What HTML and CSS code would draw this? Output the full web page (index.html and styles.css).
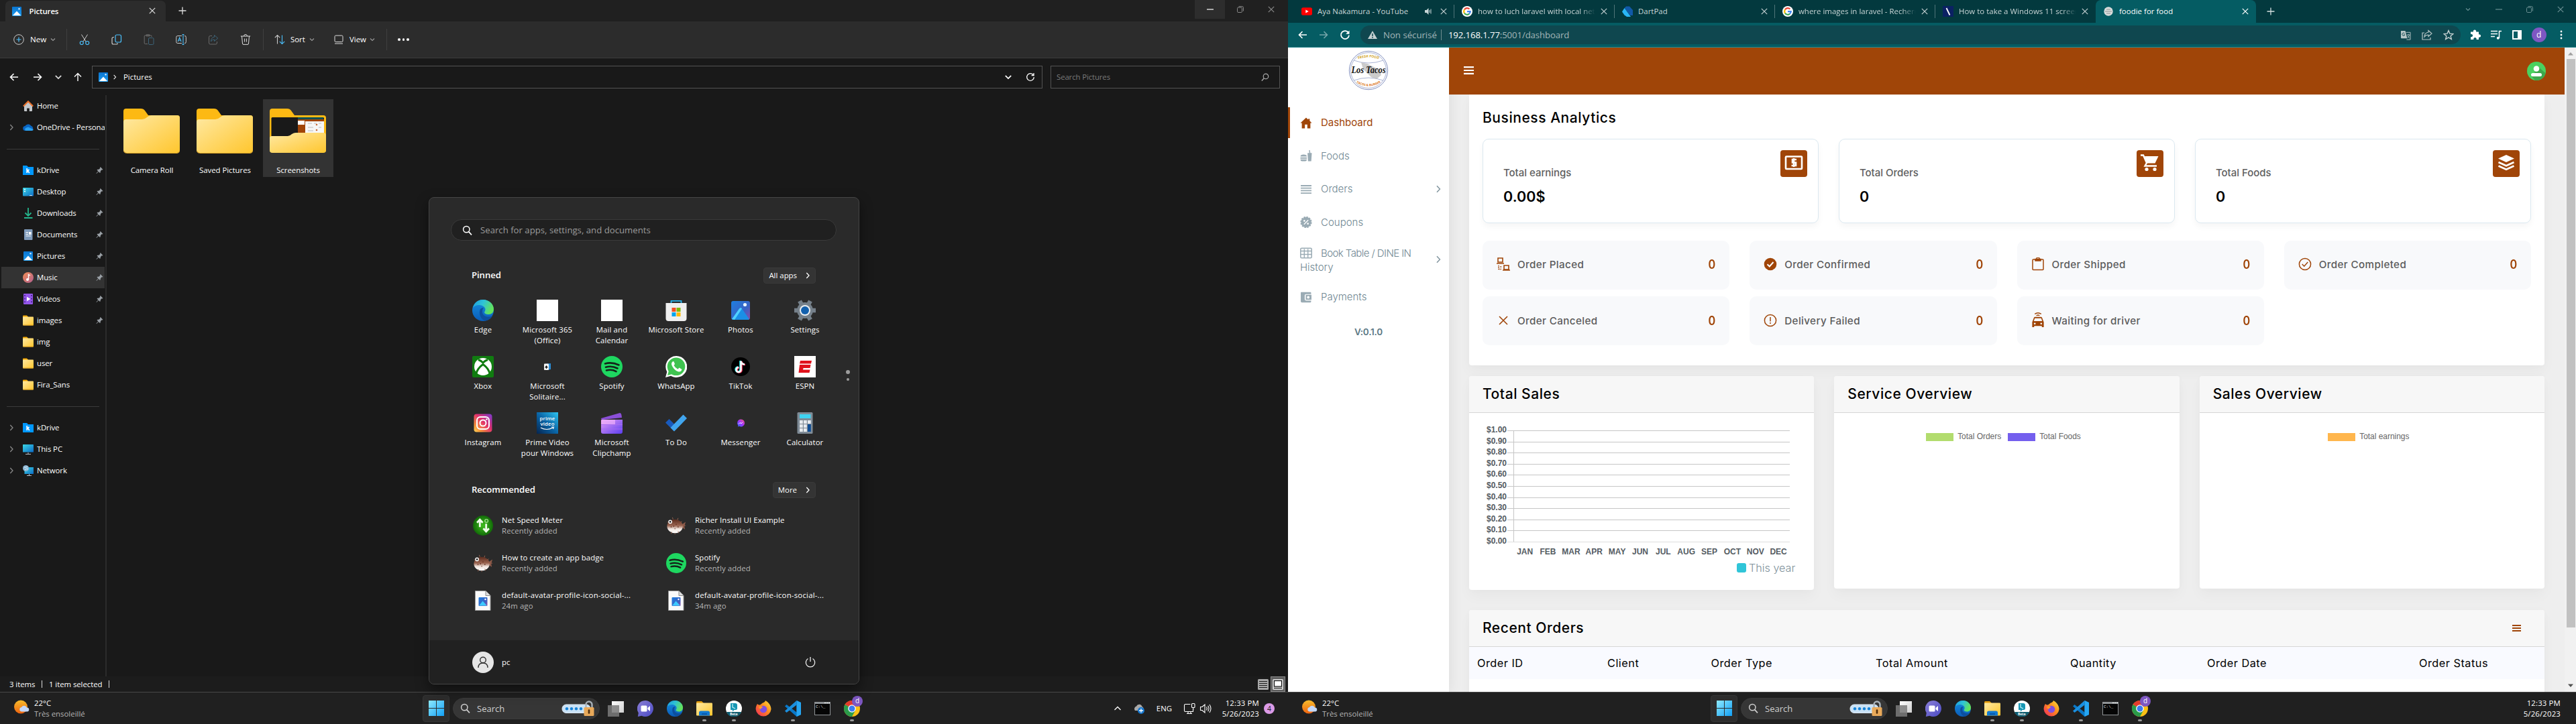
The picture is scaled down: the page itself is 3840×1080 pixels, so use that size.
FILE: index.html
```html
<!DOCTYPE html>
<html lang="en">
<head>
<meta charset="utf-8">
<title>Desktop</title>
<link rel="stylesheet" href="styles.css">
</head>
<body>
<svg class="defs" aria-hidden="true">
  <defs>
    <linearGradient id="gPic" x1="0" y1="0" x2="0" y2="1"><stop offset="0" stop-color="#0a74cf"/><stop offset="1" stop-color="#1f9df0"/></linearGradient>
    <linearGradient id="gFold" x1="0" y1="0" x2="1" y2="1"><stop offset="0" stop-color="#ffe9a3"/><stop offset="1" stop-color="#ffc62e"/></linearGradient>
    <linearGradient id="gScreen" x1="0" y1="0" x2="1" y2="1"><stop offset="0" stop-color="#3bd8e6"/><stop offset="1" stop-color="#0c69c4"/></linearGradient>
    <linearGradient id="gWin" x1="0" y1="0" x2="1" y2="1"><stop offset="0" stop-color="#8eeaff"/><stop offset="1" stop-color="#12a0f5"/></linearGradient>
    <linearGradient id="gMusic" x1="0" y1="0" x2="1" y2="1"><stop offset="0" stop-color="#f38e54"/><stop offset="1" stop-color="#b15f8f"/></linearGradient>
    <linearGradient id="gSun" x1="0" y1="0" x2="0" y2="1"><stop offset="0" stop-color="#f7bc2c"/><stop offset="1" stop-color="#ee6410"/></linearGradient>
    <linearGradient id="gInsta" x1="1" y1="0" x2="0" y2="1"><stop offset="0" stop-color="#7a3bd2"/><stop offset=".45" stop-color="#e1306c"/><stop offset=".8" stop-color="#f99a3b"/><stop offset="1" stop-color="#ffd65a"/></linearGradient>
    <linearGradient id="gPrime" x1="1" y1="0" x2="0" y2="1"><stop offset="0" stop-color="#2ec4ef"/><stop offset=".5" stop-color="#0a66a8"/><stop offset="1" stop-color="#06244e"/></linearGradient>
    <linearGradient id="gClip" x1="0" y1="0" x2="1" y2="1"><stop offset="0" stop-color="#e59cf5"/><stop offset="1" stop-color="#5b3df0"/></linearGradient>
    <linearGradient id="gPhotos" x1="0" y1="0" x2="1" y2="1"><stop offset="0" stop-color="#1d7fe0"/><stop offset=".6" stop-color="#3a62c4"/><stop offset="1" stop-color="#8c4ea8"/></linearGradient>
    <linearGradient id="gEdgeTop" x1="0" y1="0" x2="1" y2=".4"><stop offset="0" stop-color="#1c9be0"/><stop offset=".5" stop-color="#2fc3d6"/><stop offset="1" stop-color="#62e35c"/></linearGradient>
    <linearGradient id="gEdge" x1="0" y1="0" x2="0" y2="1"><stop offset="0" stop-color="#1790e0"/><stop offset="1" stop-color="#0a5cb8"/></linearGradient>
    <linearGradient id="gChat" x1="0" y1="0" x2="1" y2="1"><stop offset="0" stop-color="#8b7fd6"/><stop offset="1" stop-color="#4b4bc4"/></linearGradient>
    <linearGradient id="gFox" x1="1" y1="0" x2="0" y2="1"><stop offset="0" stop-color="#ffe63d"/><stop offset=".45" stop-color="#ff8a1e"/><stop offset="1" stop-color="#f0245f"/></linearGradient>
    <linearGradient id="gMsg" x1="0" y1="1" x2="1" y2="0"><stop offset="0" stop-color="#2a6bff"/><stop offset=".5" stop-color="#a033ff"/><stop offset="1" stop-color="#ff5f70"/></linearGradient>
    <linearGradient id="gTask" x1="0" y1="0" x2="1" y2="1"><stop offset="0" stop-color="#ffffff"/><stop offset="1" stop-color="#cfcfcf"/></linearGradient>
    <linearGradient id="gPuff" x1="0" y1="0" x2="0" y2="1"><stop offset="0" stop-color="#5a2a1c"/><stop offset=".45" stop-color="#9a6450"/><stop offset=".7" stop-color="#f1e6e0"/><stop offset="1" stop-color="#ffffff"/></linearGradient>
    <radialGradient id="gNet"><stop offset="0" stop-color="#3fbf1e"/><stop offset="1" stop-color="#126b08"/></radialGradient>
  </defs>

  <symbol id="pic" viewBox="0 0 14 14"><rect width="14" height="14" rx="1" fill="url(#gPic)"/><path d="M1 13 7 6.5 13 13z" fill="#fff"/><circle cx="10.5" cy="3.3" r="1.2" fill="#cfeaff"/></symbol>
  <symbol id="chevd" viewBox="0 0 10 10"><path d="M2 3.5 5 6.5 8 3.5" fill="none" stroke="currentColor" stroke-width="1.2"/></symbol>
  <symbol id="chevr" viewBox="0 0 10 10"><path d="M3.3 1 7 5 3.3 9" fill="none" stroke="currentColor" stroke-width="1.3"/></symbol>
  <symbol id="x" viewBox="0 0 10 10"><path d="M.8.8 9.2 9.2M9.2.8.8 9.2" fill="none" stroke="currentColor" stroke-width="1.2"/></symbol>
  <symbol id="plus" viewBox="0 0 12 12"><path d="M6 .5v11M.5 6h11" fill="none" stroke="currentColor" stroke-width="1.3"/></symbol>
  <symbol id="restore" viewBox="0 0 10 10"><rect x=".5" y="2.2" width="7" height="7.3" rx="1.3" fill="none" stroke="currentColor"/><path d="M2.5.6h5A2 2 0 0 1 9.5 2.6v5" fill="none" stroke="currentColor"/></symbol>
  <symbol id="dash" viewBox="0 0 10 10"><path d="M0 5h10" stroke="currentColor" stroke-width="1.2"/></symbol>
  <symbol id="left" viewBox="0 0 14 14"><path d="M13 7H1.5M6.5 2l-5 5 5 5" fill="none" stroke="currentColor" stroke-width="1.6"/></symbol>
  <symbol id="right" viewBox="0 0 14 14"><path d="M1 7h11.5M7.5 2l5 5-5 5" fill="none" stroke="currentColor" stroke-width="1.6"/></symbol>
  <symbol id="up" viewBox="0 0 14 14"><path d="M7 13V1.5M2 6.5l5-5 5 5" fill="none" stroke="currentColor" stroke-width="1.4"/></symbol>
  <symbol id="reload" viewBox="0 0 16 16"><path d="M13.3 5.2A6 6 0 1 0 14 8.6" fill="none" stroke="currentColor" stroke-width="1.8"/><path d="M14.5 1.5v5.3H9.2z" fill="currentColor"/></symbol>
  <symbol id="refresh" viewBox="0 0 14 14"><path d="M11.5 4.2A5.3 5.3 0 1 0 12.3 7M12 1v3.5H8.6" fill="none" stroke="currentColor" stroke-width="1.3"/></symbol>
  <symbol id="mag" viewBox="0 0 16 16"><circle cx="6.7" cy="6.5" r="5" fill="none" stroke="currentColor" stroke-width="1.6"/><path d="m10.3 10.3 4.6 5" stroke="currentColor" stroke-width="1.8"/></symbol>
  <symbol id="pin" viewBox="0 0 12 12"><path d="M7.3.6 11.5 4.8 10.3 5.5 9.3 5.3 7.4 7.6 7.3 9.6 6.5 10.4 4.3 8.2 1 11.4.5 11 3.7 7.6 1.7 5.5 2.5 4.7 4.5 4.6 6.8 2.7 6.6 1.6z" fill="#9aa0a6"/></symbol>
  <symbol id="fold" viewBox="0 0 16 16"><path d="M0 1.5Q0 .6 1 .6h5L8 2.6V6H0z" fill="#f5a800"/><rect y="2.4" width="16" height="13" rx="1" fill="url(#gFold)"/><path d="M0 14.4h16q0 1-1 1H1q-1 0-1-1z" fill="#e0a11c"/></symbol>
  <symbol id="bigfold" viewBox="0 0 84 67"><path d="M0 4Q0 0 4 0h22q4 0 6 3l5 7H80q4 0 4 4v12H0z" fill="#fdb913"/><path d="M0 20q0-4 4-4H28q4 0 7-3 3-3 7-3H80q4 0 4 4V62q0 4-4 4H4q-4 0-4-4z" fill="url(#gFold)"/><path d="M.5 63q1 3.500 4 3.500H80q3 0 3.500-3.500" fill="none" stroke="#dba226"/></symbol>
  <symbol id="kdrive" viewBox="0 0 16 16"><path d="M0 1h6l2 2h8v12H0z" fill="#0098ff"/><path d="M6.200 5v7M6.200 9.500 9.500 7M7.300 8.700 9.800 12" stroke="#fff" stroke-width="1.700" fill="none"/></symbol>
  <symbol id="edge" viewBox="0 0 32 32"><circle cx="16" cy="16" r="16" fill="url(#gEdge)"/><path d="M1 12C3 4 9 0 16 0c9 0 16 6.500 16 14 0 5-3 8-8 8-4 0-6-1.500-6-3 0-1 1.500-2 1.500-4.500C19.500 11 15 8 10.500 8 6 8 2.500 10 1 12z" fill="url(#gEdgeTop)"/><path d="M12 14c-3 6 0 16 8 17.500 5-1 8.500-4 10-7.500-6 3.500-15 1-15-6 0-3 1-5 2-6-2 0-4 1-5 2z" fill="#0d4f9e"/></symbol>
  <symbol id="spotify" viewBox="0 0 32 32"><circle cx="16" cy="16" r="16" fill="#1ed760"/><path d="M6 11.500q10-3 20.500 2M7 16.700q9-2.600 17.500 1.800M8 21.500q8-2 14.500 1.600" fill="none" stroke="#14241a" stroke-width="2.600" stroke-linecap="round"/></symbol>
  <symbol id="puffer" viewBox="0 0 32 32"><path d="M24 15l7-5-1.500 5.500L32 16l-3 1 1 5-6-4z" fill="#8d5a49"/><ellipse cx="14" cy="17" rx="12.500" ry="11" fill="url(#gPuff)"/><path d="M2 10 4 12M10 3l1 3M19 4l-1 3M25 9l-2 2M8 29l1-3M20 28l-1-3M14 30v-2" stroke="#9a6450"/><circle cx="6.500" cy="10" r="3" fill="#fff"/><circle cx="6.500" cy="10" r="1.500" fill="#222"/><g fill="#6f3a2a"><circle cx="12" cy="17" r="1"/><circle cx="16" cy="14" r="1"/><circle cx="19" cy="18" r="1"/><circle cx="8" cy="18" r="1"/><circle cx="14" cy="21" r=".8"/></g></symbol>
  <symbol id="docpic" viewBox="0 0 24 30"><path d="M.5.500H16l7 7V29.500H.5z" fill="#fafafa" stroke="#9b9b9b"/><path d="M16 .5v7h7" fill="#ddd" stroke="#8a8a8a"/><rect x="5.500" y="10" width="13" height="13" rx="1" fill="url(#gPhotos)"/><path d="M6 22.500 11.500 15.500 18 22.500z" fill="#3ccaff"/><circle cx="15.500" cy="13" r="1.200" fill="#fff"/></symbol>
  <symbol id="winlogo" viewBox="0 0 23 23"><path d="M0 0h11v11H0zM12 0h11v11H12zM0 12h11v11H0zM12 12h11v11H12z" fill="url(#gWin)"/></symbol>
  <symbol id="weather" viewBox="0 0 24 22"><circle cx="11" cy="10.500" r="10" fill="url(#gSun)"/><path d="M12 17.500a3.300 3.300 0 0 1 0-6.500 4.500 4.500 0 0 1 8 .5 3 3 0 0 1 .5 6z" fill="#c3d8fb"/></symbol>
  <symbol id="lock" viewBox="0 0 50 24"><rect x="1" y="6" width="42" height="12.500" rx="6" fill="#c9e2f7" stroke="#dfe9f2"/><g fill="#1683d8"><circle cx="8" cy="12.300" r="2.200"/><circle cx="15" cy="12.300" r="2.200"/><circle cx="22" cy="12.300" r="2.200"/><circle cx="29" cy="12.300" r="2.200"/></g><path d="M36.500 11V6a4.500 4.500 0 0 1 9 0v5" fill="none" stroke="#a9b3bb" stroke-width="2.400"/><rect x="33.500" y="10" width="15" height="13" rx="1.500" fill="#e8a95a"/><path d="M41 14.500v4" stroke="#4d2c0c" stroke-width="2.600" stroke-linecap="round"/></symbol>
  <symbol id="taskview" viewBox="0 0 24 24"><rect x="6" y="1" width="18" height="17" fill="url(#gTask)"/><rect x="0" y="7" width="17" height="17" fill="#7b7b7b" opacity=".85"/></symbol>
  <symbol id="chat" viewBox="0 0 24 24"><path d="M12 0a12 12 0 1 1-5.500 22.700L.8 24l1-5.500A12 12 0 0 1 12 0z" fill="url(#gChat)"/><rect x="5.500" y="7.500" width="9" height="9" rx="1.500" fill="#fff"/><path d="m15.500 11 3.500-3v8l-3.500-3z" fill="#fff"/></symbol>
  <symbol id="explorer" viewBox="0 0 24 24"><path d="M0 2.500Q0 1 1.500 1H8l2.500 2.500V9H0z" fill="#e39a08"/><rect y="3.500" width="24" height="19" rx="1.200" fill="url(#gFold)"/><path d="M4 22.500V18a2.500 2.500 0 0 1 2.500-2.500h11A2.500 2.500 0 0 1 20 18v4.500z" fill="#127ad1"/><path d="M8 20h8" stroke="#0b4f9a" stroke-width="1.500"/></symbol>
  <symbol id="bing" viewBox="0 0 24 24"><circle cx="12" cy="12" r="12" fill="#fff"/><path d="M.9 17h22.200A12 12 0 0 1 .9 17z" fill="#0f5c6e"/><path d="M7 4h7q3 0 3 3v5q0 2-2.500 2h-2L10 16.500V14H7z" fill="#1796b4"/><path d="M10 5v5l4 2" stroke="#bff0f5" stroke-width="1.300" fill="none"/></symbol>
  <symbol id="firefox" viewBox="0 0 24 24"><path d="M3 5c1 1 2 1.500 4 1.500C9 5 10 4 11 3.500 13 3 14.500 2 15 0c4 2 8.500 7 8.500 13A11.500 11.500 0 0 1 .6 13C.5 10 1.500 7 3 5z" fill="url(#gFox)"/><circle cx="12" cy="13" r="5.300" fill="#7e4fe0"/><path d="M5.500 9c2-1 4-.5 6 1-2 .5-3 1.500-3.500 3-2-1-3-2-2.500-4z" fill="#ff9b24"/></symbol>
  <symbol id="vscode" viewBox="0 0 24 24"><path d="M17.500 0 24 3v18l-6.500 3L0 8.500 2.500 6 17.500 17.500z" fill="#0a78c8"/><path d="M17.500 0 24 3v18l-6.500 3z" fill="#26a6f2"/><path d="M17.500 6.500 2.500 18 0 15.500 17.500 0z" fill="#1a8fdf"/></symbol>
  <symbol id="cmd" viewBox="0 0 24 20"><rect width="24" height="20" fill="#8f9396"/><rect x="1" y="3" width="22" height="16" fill="#050505"/><path d="M15 1.500h2M18 1.500h2M21 1.500h2" stroke="#fff"/></symbol>
  <symbol id="chrome" viewBox="0 0 24 24"><circle cx="12" cy="12" r="12" fill="#fbc116"/><path d="M12 12 1.600 6A12 12 0 0 1 22.400 6z" fill="#e33b2e"/><path d="M12 12 1.600 6A12 12 0 0 0 12 24l5-9z" fill="#2a9b4a"/><circle cx="12" cy="12" r="5.800" fill="#fff"/><circle cx="12" cy="12" r="4.500" fill="#3a7cf0"/></symbol>
  <symbol id="google" viewBox="0 0 16 16"><circle cx="8" cy="8" r="8" fill="#fff"/><g fill="none" stroke-width="2.200"><path d="M4 5.300A4.700 4.700 0 0 1 11.400 4.600" stroke="#ea4335"/><path d="M4 10.600a4.700 4.700 0 0 1 0-5.300" stroke="#fbbc05"/><path d="M11.200 11.500A4.700 4.700 0 0 1 4 10.600" stroke="#34a853"/><path d="M8 8.200h4.700a4.700 4.700 0 0 1-1.500 3.300" stroke="#4285f4"/></g></symbol>
</svg>

<div class="desk">

<!-- Left display: file explorer -->
<section class="screen left-screen">
  <div class="titlebar">
    <div class="tab-ex"><svg class="i14"><use href="#pic"/></svg><b>Pictures</b><svg class="i10"><use href="#x"/></svg></div>
    <svg class="i12 newtab"><use href="#plus"/></svg>
    <div class="winbtns"><span class="hot"><svg class="i10"><use href="#dash"/></svg></span><span><svg class="i10"><use href="#restore"/></svg></span><span><svg class="i10"><use href="#x"/></svg></span></div>
  </div>
  <div class="cmdbar">
    <div class="cmd c-new"><svg class="i16" viewBox="0 0 16 16"><circle cx="8" cy="8" r="7.300" fill="none" stroke="#ccc"/><path d="M8 4.500v7M4.500 8h7" stroke="#4cc2ff" stroke-width="1.200"/></svg><span>New</span><svg class="i10"><use href="#chevd"/></svg></div>
    <div class="cmd-icons">
      <svg class="i16" viewBox="0 0 16 16" fill="none"><path d="M3.500.5 10 11M12.500.500 6 11" stroke="#ccc"/><circle cx="3.800" cy="13" r="2.500" stroke="#4cc2ff" stroke-width="1.200"/><circle cx="12.200" cy="13" r="2.500" stroke="#4cc2ff" stroke-width="1.200"/></svg>
      <svg class="i16" viewBox="0 0 16 16" fill="none"><path d="M4 4.500H3a2 2 0 0 0-2 2V13a2 2 0 0 0 2 2h4.500a2 2 0 0 0 2-1.500" stroke="#ccc" stroke-width="1.200"/><rect x="6" y="1" width="8.500" height="11" rx="2" stroke="#4cc2ff" stroke-width="1.200"/></svg>
      <svg class="i16 dim" viewBox="0 0 16 16" fill="none"><path d="M6 14.500H2.500A1.300 1.300 0 0 1 1.200 13V3A1.300 1.300 0 0 1 2.500 1.800h8A1.300 1.300 0 0 1 12 3v1M4 .8h5v2H4z" stroke="#aaa"/><rect x="7.500" y="5.500" width="7.500" height="10" rx="1.500" stroke="#4c9bc4"/></svg>
      <svg class="i16" viewBox="0 0 16 16" fill="none"><path d="M9 2.500H2.800A2 2 0 0 0 .8 4.500v7a2 2 0 0 0 2 2H9M13 2.500a2 2 0 0 1 2.300 2v7a2 2 0 0 1-2.300 2" stroke="#ccc"/><path d="M11 .5v15M9.500.500h3M9.500 15.500h3M3.300 11 5.700 5l2.400 6M4.200 9h3" stroke="#4cc2ff" stroke-width="1.100"/></svg>
      <svg class="i16 dim" viewBox="0 0 16 16" fill="none"><path d="M6 2.500H3.500a2 2 0 0 0-2 2V13a2 2 0 0 0 2 2h8a2 2 0 0 0 2-2v-2" stroke="#aaa"/><path d="M9.500 1.500 14.800 6l-5.300 4.500V8C7 8 5.500 9 4.500 11 4.500 7.500 6 4.500 9.500 4.200z" stroke="#4c9bc4"/></svg>
      <svg class="i16" viewBox="0 0 16 16" fill="none" stroke="#ddd"><path d="M.8 3h14.400M5.500 3a2.500 2.500 0 0 1 5 0M2.500 3l1 11a1.500 1.500 0 0 0 1.500 1.400h6A1.500 1.500 0 0 0 12.500 14l1-11M6.600 6.500v5M9.400 6.500v5"/></svg>
    </div>
    <div class="cmd c-sort"><svg class="i16" viewBox="0 0 16 16" fill="none" stroke-width="1.100"><path d="M4.500 14.500V1.500M.8 5.200 4.500 1.500 8.200 5.200" stroke="#ccc"/><path d="M11.500 1.500v13M7.800 10.800l3.700 3.700 3.700-3.700" stroke="#4cc2ff"/></svg><span>Sort</span><svg class="i10"><use href="#chevd"/></svg></div>
    <div class="cmd c-view"><svg class="i14" viewBox="0 0 14 14" fill="none" stroke="#ddd"><rect x="1" y="1" width="12" height="9.500" rx="1.500"/><path d="M1 13h12"/></svg><span>View</span><svg class="i10"><use href="#chevd"/></svg></div>
    <div class="dots"><i></i><i></i><i></i></div>
  </div>
  <div class="addr">
    <div class="addr-nav"><svg class="i14"><use href="#left"/></svg><svg class="i14"><use href="#right"/></svg><svg class="i14 n3"><use href="#chevd"/></svg><svg class="i14"><use href="#up"/></svg></div>
    <div class="addr-box"><svg class="i14"><use href="#pic"/></svg><svg class="i8"><use href="#chevr"/></svg><span>Pictures</span><svg class="i14 end"><use href="#chevd"/></svg><svg class="i14"><use href="#refresh"/></svg></div>
    <div class="addr-search"><span>Search Pictures</span><svg class="i12 flip"><use href="#mag"/></svg></div>
  </div>
  <div class="ex-body">
    <nav class="tree">
      <div class="row"><svg class="i16" viewBox="0 0 16 16"><path d="M2 7.500 8 2l6 5.500V15a1 1 0 0 1-1 1H9.800v-4.500H6.200V16H3a1 1 0 0 1-1-1z" fill="#c3c7cb"/><path d="M.8 8.500 8 1.200l7.200 7.300" fill="none" stroke="#e8702a" stroke-width="2"/></svg><span>Home</span></div>
      <div class="row"><svg class="i10 tw"><use href="#chevr"/></svg><svg class="i16" viewBox="0 0 16 16"><path d="M4 13a3.500 3.500 0 0 1-.5-7A5 5 0 0 1 12 5.500 4 4 0 0 1 13 13z" fill="#0a65c2"/><path d="M4 13a3 3 0 0 1 0-4l4-1.500L15.800 11A2.500 2.500 0 0 1 13.500 13z" fill="#2aa0ee"/></svg><span>OneDrive - Persona</span></div>
      <div class="rule"></div>
      <div class="row"><svg class="i16"><use href="#kdrive"/></svg><span>kDrive</span><svg class="pin"><use href="#pin"/></svg></div>
      <div class="row"><svg class="i16" viewBox="0 0 16 16"><rect y="2" width="16" height="12.500" rx="1" fill="url(#gScreen)"/><path d="M2 4.500h2M2 7.500h2" stroke="#fff" stroke-width="1.600"/><path d="M10 13.500h4" stroke="#fff" stroke-width=".8"/></svg><span>Desktop</span><svg class="pin"><use href="#pin"/></svg></div>
      <div class="row"><svg class="i16" viewBox="0 0 16 16" fill="none" stroke="#24b58c" stroke-width="1.800"><path d="M8 0v11.500M3.500 7.500 8 12l4.500-4.500M2 15h12.500"/></svg><span>Downloads</span><svg class="pin"><use href="#pin"/></svg></div>
      <div class="row"><svg class="i16" viewBox="0 0 16 16"><rect x="2" width="12.500" height="16" rx="1" fill="#7f9bbb"/><path d="M4.500 4.800h3.500M4.500 7.500h3.500M4.500 10h7.500" stroke="#fff" stroke-width="1.200"/><rect x="9" y="4" width="3.500" height="4" fill="#fff"/></svg><span>Documents</span><svg class="pin"><use href="#pin"/></svg></div>
      <div class="row"><svg class="i16 pd"><use href="#pic"/></svg><span>Pictures</span><svg class="pin"><use href="#pin"/></svg></div>
      <div class="row on"><svg class="i16" viewBox="0 0 16 16"><circle cx="8" cy="8" r="8" fill="url(#gMusic)"/><path d="M8.500 11V3.500l2.500 1.500" stroke="#fff" stroke-width="1.400" fill="none"/><circle cx="7" cy="11" r="2" fill="#fff"/></svg><span>Music</span><svg class="pin"><use href="#pin"/></svg></div>
      <div class="row"><svg class="i16" viewBox="0 0 16 16"><rect x="1" width="14" height="16" rx="1" fill="#9456ea"/><path d="M3 2v12M13 2v12" stroke="#3d1f7d" stroke-width="1.500" stroke-dasharray="2 2.600"/><path d="M6 4.800 11.500 8 6 11.200z" fill="#fff"/></svg><span>Videos</span><svg class="pin"><use href="#pin"/></svg></div>
      <div class="row"><svg class="i16 f"><use href="#fold"/></svg><span>images</span><svg class="pin"><use href="#pin"/></svg></div>
      <div class="row"><svg class="i16 f"><use href="#fold"/></svg><span>img</span></div>
      <div class="row"><svg class="i16 f"><use href="#fold"/></svg><span>user</span></div>
      <div class="row"><svg class="i16 f"><use href="#fold"/></svg><span>Fira_Sans</span></div>
      <div class="rule"></div>
      <div class="row"><svg class="i10 tw"><use href="#chevr"/></svg><svg class="i16"><use href="#kdrive"/></svg><span>kDrive</span></div>
      <div class="row"><svg class="i10 tw"><use href="#chevr"/></svg><svg class="i16" viewBox="0 0 16 16"><rect y="1" width="16" height="11.500" rx=".6" fill="url(#gScreen)"/><path d="M8 13v2.500M4 15.500h8" stroke="#b7c0c8"/></svg><span>This PC</span></div>
      <div class="row"><svg class="i10 tw"><use href="#chevr"/></svg><svg class="i16" viewBox="0 0 16 16"><rect x="2.500" y="3" width="13.500" height="10" fill="url(#gScreen)"/><circle cx="4.500" cy="4.500" r="4.500" fill="#8fb9d6"/><path d="M2 3q2 1 5-1M3 7q3-3 5-1" stroke="#d8ecf8" fill="none"/><path d="M9.500 13v2.500M6 15.500h7" stroke="#b7c0c8"/></svg><span>Network</span></div>
    </nav>
    <div class="files">
      <div class="file"><svg class="big"><use href="#bigfold"/></svg><span>Camera Roll</span></div>
      <div class="file"><svg class="big"><use href="#bigfold"/></svg><span>Saved Pictures</span></div>
      <div class="file on"><svg class="big" viewBox="0 0 84 67"><path d="M0 4Q0 0 4 0h22q4 0 6 3l5 7H80q4 0 4 4v50H0z" fill="#fdb913"/><rect x="2.500" y="13" width="78.500" height="30" rx="1.500" fill="#191919"/><path d="M42 13h38v3H42z" fill="#0b5156"/><path d="M42 16h11v22H42zM53 16h28v3H53z" fill="#a04508"/><path d="M53 19h28v21H53z" fill="#f7f7f7"/><path d="M42 18h10v6H42z" fill="#fff"/><path d="M57 22h6M57 28h8M57 33h8M73 22h4M73 28h4M66 22h4" stroke="#bbb"/><circle cx="70" cy="24" r="1.300" fill="#c66b3a"/><circle cx="70" cy="32" r="1.300" fill="#c66b3a"/><path d="M0 44q0-3 3-3H27q3 0 6-3 3-2 6-2H80q4 0 4 4V62q0 4-4 4H4q-4 0-4-4z" fill="url(#gFold)"/></svg><span>Screenshots</span></div>
    </div>
  </div>
  <div class="status"><span>3 items</span><i></i><span>1 item selected</span><i></i>
    <svg class="v1" viewBox="0 0 16 16"><rect width="16" height="16" rx="1.500" fill="#a8a8a8"/><path d="M2 3.500h12M2 6.500h12M2 9.500h12M2 12.500h12" stroke="#1c1c1c"/></svg>
    <div class="v2"><svg viewBox="0 0 16 16"><rect width="16" height="16" rx="1.500" fill="#d0d0d0"/><rect x="2.500" y="2.500" width="11" height="8.500" fill="#fff" stroke="#111" stroke-width="1.200"/><path d="M2 13.500h12" stroke="#111"/></svg></div>
  </div>

  <footer class="taskbar">
    <div class="wx"><svg><use href="#weather"/></svg><p>22°C<br><small>Très ensoleillé</small></p></div>
    <div class="dock">
      <span class="start"><svg><use href="#winlogo"/></svg></span>
      <div class="tsearch"><svg class="i15"><use href="#mag"/></svg><span>Search</span><svg class="lk"><use href="#lock"/></svg></div>
      <span class="app"><svg><use href="#taskview"/></svg></span><span class="app"><svg><use href="#chat"/></svg></span><span class="app"><svg><use href="#edge"/></svg></span><span class="app run"><svg><use href="#explorer"/></svg></span><span class="app run"><svg><use href="#bing"/></svg><small class="beta">Beta</small></span><span class="app"><svg><use href="#firefox"/></svg></span><span class="app run"><svg><use href="#vscode"/></svg></span><span class="app"><svg><use href="#cmd"/></svg><small class="prompt">C:\_</small></span><span class="app run"><svg><use href="#chrome"/></svg><em>d</em></span>
    </div>
    <div class="tray">
      <svg class="i14 tchev" viewBox="0 0 14 14"><path d="M2.500 9 7 4.500 11.500 9" fill="none" stroke="#fff" stroke-width="1.300"/></svg>
      <svg class="i16 tcloud" viewBox="0 0 16 16"><path d="M2 11a4 4 0 0 1 2-6.500A4.500 4.500 0 0 1 12.500 5a4 4 0 0 1 1.500 6z" fill="#a9a9a9"/><circle cx="11" cy="11" r="5" fill="#1878cf"/><path d="M11 8v6M8 11h6" stroke="#fff" stroke-width="1.300"/></svg>
      <span class="eng">ENG</span>
      <svg class="i18 tnet" viewBox="0 0 18 18" fill="none" stroke="#fff" stroke-width="1.100"><path d="M10.500 2.500H3A1.500 1.500 0 0 0 1.500 4v8A1.500 1.500 0 0 0 3 13.500h11.500V10M5 16.500h8M7 13.500v3M11 13.500v3"/><rect x="12.500" y="1.500" width="4.500" height="6" rx="1"/><path d="M14.700 7.500V11"/></svg>
      <svg class="i18" viewBox="0 0 18 18" fill="none" stroke="#fff" stroke-width="1.100"><path d="M1.500 6.500h2.500L8 3v12L4 11.500H1.500zM10.500 6.500q1.500 2.500 0 5M12.700 4.800q2.600 4 0 8.400M15 3q4 6 0 12"/></svg>
      <p class="clock">12:33 PM<br>5/26/2023</p>
      <b class="notif">4</b>
    </div>
  </footer>

  <!-- Start menu -->
  <div class="start-menu">
    <div class="sm-search"><svg class="i15"><use href="#mag"/></svg><span>Search for apps, settings, and documents</span></div>
    <div class="sm-head h-pin"><h3>Pinned</h3><button>All apps<svg class="i10"><use href="#chevr"/></svg></button></div>
    <div class="pins">
      <div><svg><use href="#edge"/></svg><span>Edge</span></div>
      <div><svg viewBox="0 0 32 32"><rect width="32" height="32" fill="#fff"/></svg><span>Microsoft 365<br>(Office)</span></div>
      <div><svg viewBox="0 0 32 32"><rect width="32" height="32" fill="#fff"/></svg><span>Mail and<br>Calendar</span></div>
      <div><svg viewBox="0 0 32 32"><path d="M8.500 6V1.800h15V6" fill="none" stroke="#29b6ee" stroke-width="1.800"/><path d="M.5 5h31v23a4 4 0 0 1-4 4h-23a4 4 0 0 1-4-4z" fill="#efefef"/><path d="M9.500 12h6v6h-6z" fill="#f25022"/><path d="M16.500 12h6v6h-6z" fill="#7fba00"/><path d="M9.500 19h6v6h-6z" fill="#00a4ef"/><path d="M16.500 19h6v6h-6z" fill="#ffb900"/></svg><span>Microsoft Store</span></div>
      <div><svg viewBox="0 0 32 32"><rect x="2" y="2" width="28" height="28" rx="3" fill="url(#gPhotos)"/><path d="M3 29 14 13.500q2-2.500 4 0L29 29q-1 1-2 1H5q-1 0-2-1z" fill="#1b8fe6"/><path d="M3 29 14 13.500q2-2.500 4 0L7 30z" fill="#4fd0ff"/><circle cx="22.500" cy="7.500" r="2.600" fill="#e8f4ff"/></svg><span>Photos</span></div>
      <div><svg viewBox="0 0 32 32"><path d="M0 16h32M8 2l16 28M24 2 8 30" stroke="#75808a" stroke-width="6.500"/><circle cx="16" cy="16" r="12" fill="#75808a"/><circle cx="16" cy="16" r="8" fill="#e9eef2"/><circle cx="16" cy="16" r="6" fill="#1260ad"/></svg><span>Settings</span></div>
      <div><svg viewBox="0 0 32 32"><rect width="32" height="32" rx="2" fill="#107c10"/><circle cx="16" cy="16" r="13" fill="#fff"/><path d="M5.500 27Q8 18 16 12.500 24 18 26.500 27M9 5.500Q13 7 16 10q3-3 7-4.500" fill="none" stroke="#107c10" stroke-width="3"/></svg><span>Xbox</span></div>
      <div><svg viewBox="0 0 32 32"><path d="M13 12l8-1v9l-6 1z" fill="#2b8fd8"/><rect x="11" y="11.500" width="7" height="9.500" rx="1" fill="#f4f4f4"/><path d="M14.500 14 17 17.500h-5zM14 16h1v3h-1z" fill="#111"/></svg><span>Microsoft<br>Solitaire...</span></div>
      <div><svg><use href="#spotify"/></svg><span>Spotify</span></div>
      <div><svg viewBox="0 0 32 32"><path d="M16 0a16 16 0 1 1-8 29.700L0 32l2.300-8.200A16 16 0 0 1 16 0z" fill="#fff"/><circle cx="16" cy="15.800" r="13.300" fill="#3fc350"/><path d="m5 22-2 7 7-2z" fill="#3fc350"/><path d="M10.500 8.500q-3 3 0 7.500 3.500 6 9 7.500 4 .5 5-3.500l-4-2.500-2 2.200q-4-1.700-6-5.700l1.500-2-1.700-4z" fill="#fff"/></svg><span>WhatsApp</span></div>
      <div><svg viewBox="0 0 32 32"><circle cx="16" cy="16" r="14" fill="#000"/><g fill="none" stroke-width="2.600"><path d="M15.500 7v13.500a3.500 3.500 0 1 1-3.500-4M15.500 7.500q1 4.500 5.500 4.500" stroke="#25f4ee"/><path d="M17.500 8v13.500a3.500 3.500 0 1 1-3.500-4M17.500 8.500q1 4.500 5.500 4.500" stroke="#fe2c55"/><path d="M16.500 7.500V21a3.500 3.500 0 1 1-3.500-4M16.500 8q1 4.500 5.500 4.500" stroke="#fff"/></g></svg><span>TikTok</span></div>
      <div><svg viewBox="0 0 32 32"><rect width="32" height="32" fill="#fff"/><path d="M9 7h17l-1 4.500H8zM8 13h16.500l-1 5h-10l-.5 2.500h10.500l-1 4.500H6.500z" fill="#e0121c"/></svg><span>ESPN</span></div>
      <div><svg viewBox="0 0 32 32"><rect x="2.500" y="2.500" width="27" height="27" rx="4" fill="url(#gInsta)"/><rect x="7" y="7" width="18" height="18" rx="5" fill="none" stroke="#fff" stroke-width="2"/><circle cx="16" cy="16" r="4.500" fill="none" stroke="#fff" stroke-width="2"/><circle cx="21.500" cy="10.500" r="1.300" fill="#fff"/></svg><span>Instagram</span></div>
      <div><svg viewBox="0 0 32 32"><rect width="32" height="32" fill="url(#gPrime)"/><text x="16" y="12" font-size="7.800" text-anchor="middle" fill="#fff" font-family="Open Sans, sans-serif" font-weight="600">prime</text><text x="16" y="20" font-size="7.800" text-anchor="middle" fill="#fff" font-family="Open Sans, sans-serif" font-weight="600">video</text><path d="M6 23q9 5 18 0M22 22h3.500l-1 3" fill="none" stroke="#fff" stroke-width="1.200"/></svg><span>Prime Video<br>pour Windows</span></div>
      <div><svg viewBox="0 0 32 32"><path d="M0 9 28 1q2 0 2.500 3.500L31 8 3 11q-3 0-3-2z" fill="#8b4fd8"/><path d="M0 12.500Q0 11 2 11h30v18q0 3-3 3H3q-3 0-3-3z" fill="url(#gClip)"/><path d="M0 18.500h32M0 25h32" stroke="#a66bf0"/><path d="M0 11h21v7H0z" fill="#f0b0fa" opacity=".7"/></svg><span>Microsoft<br>Clipchamp</span></div>
      <div><svg viewBox="0 0 32 32"><path d="M0 15.500 5.500 10 17 21.500 12.500 28z" fill="#185abd"/><path d="M26.500 3.500 32 9 13 28.500 7.500 23z" fill="#41a5ee"/></svg><span>To Do</span></div>
      <div><svg viewBox="0 0 32 32"><path d="M16 10.500a5.500 5.500 0 1 1-2 10.300L12 21.500l.3-2A5.500 5.500 0 0 1 16 10.500z" fill="url(#gMsg)"/><path d="m13 17.500 2-2 2 1.200 2-1.800" stroke="#fff" fill="none"/></svg><span>Messenger</span></div>
      <div><svg viewBox="0 0 32 32"><rect x="4.500" width="23" height="32" rx="1.500" fill="#7f8b96"/><rect x="8" y="3" width="16.500" height="6" fill="#3fd3f2"/><path d="M8 12h4.800v5H8zM14 12h4.800v5H14zM20 12h4.800v5H20zM8 18h4.800v5H8zM14 18h4.800v5H14zM8 24h4.800v5H8zM14 24h4.800v5H14z" fill="#e6eaee"/><path d="M20 18h4.800v11H20z" fill="#0e4d94"/></svg><span>Calculator</span></div>
      <div class="pager"><i></i><i></i></div>
    </div>
    <div class="sm-head h-rec"><h3>Recommended</h3><button>More<svg class="i10"><use href="#chevr"/></svg></button></div>
    <div class="recs">
      <div><svg viewBox="0 0 32 32"><circle cx="16" cy="16" r="16" fill="url(#gNet)"/><path d="M11 18.500V8M6.500 11.500 11 6.500l4.500 5M21 13v10M16.500 20.500 21 25.500l4.500-5" fill="none" stroke="#eefbe8" stroke-width="3"/><circle cx="21.500" cy="8.500" r="2.500" fill="none" stroke="#9adf86" stroke-width="1.500"/></svg><p>Net Speed Meter<br><small>Recently added</small></p></div>
      <div><svg><use href="#puffer"/></svg><p>Richer Install UI Example<br><small>Recently added</small></p></div>
      <div><svg><use href="#puffer"/></svg><p>How to create an app badge<br><small>Recently added</small></p></div>
      <div><svg><use href="#spotify"/></svg><p>Spotify<br><small>Recently added</small></p></div>
      <div><svg><use href="#docpic"/></svg><p class="wide">default-avatar-profile-icon-social-...<br><small>24m ago</small></p></div>
      <div><svg><use href="#docpic"/></svg><p class="wide">default-avatar-profile-icon-social-...<br><small>34m ago</small></p></div>
    </div>
    <div class="sm-foot"><svg class="ava" viewBox="0 0 32 32"><circle cx="16" cy="16" r="16" fill="#e6e6e6"/><g fill="none" stroke="#333" stroke-width="1.400"><circle cx="16" cy="12.500" r="4.300"/><path d="M9 24q0-7 7-7t7 7"/></g></svg><span>pc</span><svg class="i16 pw" viewBox="0 0 16 16" fill="none" stroke="#eee" stroke-width="1.300"><path d="M8 0v7M4.500 2.500a6.700 6.700 0 1 0 7 0"/></svg></div>
  </div>
</section>

<!-- Right display: browser -->
<section class="screen right-screen">
  <div class="tabs">
    <div class="tab"><svg class="i16" viewBox="0 0 16 16"><rect y="2.300" width="16" height="11.400" rx="2.500" fill="#f00"/><path d="M6.300 5.500 10.700 8 6.300 10.500z" fill="#fff"/></svg><span>Aya Nakamura - YouTube</span><svg class="i12 snd" viewBox="0 0 12 12"><path d="M1 4h2.500L6.500 1v10L3.500 8H1z" fill="#c8d6d7"/><path d="M8 4v4M10 2.500v7" stroke="#c8d6d7"/></svg><svg class="i10 cl"><use href="#x"/></svg></div>
    <div class="tab"><svg class="i16"><use href="#google"/></svg><span class="fade">how to luch laravel with local netw</span><svg class="i10 cl"><use href="#x"/></svg></div>
    <div class="tab"><svg class="i16" viewBox="0 0 16 16"><path d="M3.500 3 6 .5 11 .5 16 6v8h-4z" fill="#1159a8"/><path d="M3.500 3 0 8.500l3.500 5 3.500 2.500h6L3.500 3z" fill="#29b6f6"/></svg><span>DartPad</span><svg class="i10 cl"><use href="#x"/></svg></div>
    <div class="tab"><svg class="i16"><use href="#google"/></svg><span class="fade">where images in laravel - Recherc</span><svg class="i10 cl"><use href="#x"/></svg></div>
    <div class="tab"><svg class="i16" viewBox="0 0 16 16"><rect width="16" height="16" fill="#0b2163"/><path d="m5.500 3 5 10.500" stroke="#fff" stroke-width="1.800"/></svg><span class="fade">How to take a Windows 11 screen</span><svg class="i10 cl"><use href="#x"/></svg></div>
    <div class="tab active"><svg class="i16" viewBox="0 0 16 16"><circle cx="8" cy="8" r="6.700" fill="#d9dcdc"/><path d="M3 8h10M5 5h6M5 11h6" stroke="#8d9292"/></svg><span>foodie for food</span><svg class="i10 cl"><use href="#x"/></svg></div>
    <svg class="i12 nt"><use href="#plus"/></svg>
    <div class="cw"><svg class="i10"><use href="#chevd"/></svg><svg class="i10"><use href="#dash"/></svg><svg class="i10"><use href="#restore"/></svg><svg class="i10"><use href="#x"/></svg></div>
  </div>
  <div class="bar">
    <div class="bnav"><svg class="i14"><use href="#left"/></svg><svg class="i14 off"><use href="#right"/></svg><svg class="i16"><use href="#reload"/></svg></div>
    <div class="omni"><svg class="i14" viewBox="0 0 14 14"><path d="M7 1 14 13H0z" fill="#c3cfd0"/><path d="M7 5v4M7 10v1.700" stroke="#0f474f" stroke-width="1.500"/></svg><span class="ns">Non sécurisé</span><i></i><span class="url"><b>192.168.1.77</b>:5001/dashboard</span>
      <svg class="i15 tr" viewBox="0 0 16 16"><path d="M0 1h7l3 12H1a1 1 0 0 1-1-1z" fill="#b8c6c7"/><path d="M8 3.500h7V15H9M12 6v1.500M9.500 7.500h5M13.500 8q-1 3-3 4.500M10.500 9l3 3.500" stroke="#b8c6c7" fill="none"/><path d="M5.800 5A2.200 2.200 0 1 0 6.300 7.300H4.500" fill="none" stroke="#0f474f"/></svg>
      <svg class="i16" viewBox="0 0 16 16" fill="none" stroke="#b8c6c7" stroke-width="1.200"><path d="M4 5H1v10h12v-3"/><path d="M10 1.500 15 6l-5 4.500V8Q6 8 4 11q0-6 6-7z"/></svg>
      <svg class="i16" viewBox="0 0 16 16"><path d="m8 1.500 1.900 4.600 5 .4-3.800 3.200 1.200 4.800L8 11.900l-4.300 2.600 1.200-4.800L1.100 6.500l5-.4z" fill="none" stroke="#c3cfd0" stroke-width="1.400"/></svg>
    </div>
    <div class="bext">
      <svg class="i16" viewBox="0 0 16 16"><path d="M1 3.500h4a2.200 2.200 0 1 1 4 0h4v4a2.200 2.200 0 1 1 0 4V15H9.500a2.200 2.200 0 1 0-4 0H1v-4a2.200 2.200 0 1 0 0-4z" fill="#fff"/></svg>
      <svg class="i16" viewBox="0 0 16 16" fill="none" stroke="#fff" stroke-width="1.500"><path d="M0 2.500h10M0 6.500h10M0 10.500h6M12.500 13V2.500H16"/><circle cx="10.800" cy="12.800" r="2" fill="#fff" stroke="none"/></svg>
      <svg class="i14" viewBox="0 0 14 14"><path d="M0 0h14v14H0z" fill="#fff"/><path d="M2 2h6v10H2z" fill="#055c63"/></svg>
      <em>d</em>
      <svg class="i14 kb" viewBox="0 0 14 14" fill="#fff"><circle cx="7" cy="2" r="1.400"/><circle cx="7" cy="7" r="1.400"/><circle cx="7" cy="12" r="1.400"/></svg>
    </div>
  </div>
  <div class="page">
    <aside class="side">
      <svg class="logo" viewBox="0 0 60 60"><g fill="none" stroke="#8492c0"><circle cx="30" cy="30" r="28.700"/><circle cx="30" cy="30" r="26.500" stroke-width=".7"/><path d="M8 15q22 8 44 0M8 45q22-8 44 0" stroke-width=".7"/></g><path d="M19 18l9 2 18 9 3 8-7 6-8-3-12-12z" fill="#b9b9b9" opacity=".75"/><path id="arcT" d="M13 14q17-7 34 0" fill="none"/><path id="arcB" d="M10 47q20 13 40 0" fill="none"/><text font-family="Open Sans, sans-serif" font-size="5" font-weight="700" fill="#cf9d14"><textPath href="#arcT" startOffset="50%" text-anchor="middle">FRESH FOOD</textPath></text><text font-family="Open Sans, sans-serif" font-size="4.500" font-weight="700" fill="#dd7722"><textPath href="#arcB" startOffset="50%" text-anchor="middle">TACOS &amp; BURGER</textPath></text><text x="30" y="34" text-anchor="middle" font-family="Liberation Serif, serif" font-style="italic" font-weight="700" font-size="14" textLength="51" lengthAdjust="spacingAndGlyphs" fill="#111">Los Tacos</text></svg>
      <nav>
        <a class="act"><svg viewBox="0 0 16 16"><path d="M8 .5 0 8h2v7.500h4.300V10h3.400v5.500H14V8h2l-3-3V2h-2v1.300z" fill="currentColor"/></svg>Dashboard</a>
        <a><svg viewBox="0 0 16 16" fill="currentColor"><path d="M10 4h6l-.8 11.500h-4.500zM12 0h1.300l.7 4h-1.500zM0 9q0-3 4.500-3T9 9zM0 10h9v2H0zM0 13h9q0 2.500-2 2.500H2Q0 15.500 0 13z"/></svg>Foods</a>
        <a><svg viewBox="0 0 16 16"><path d="M.5 2.800h15M.5 6.300h15M.5 9.800h15M.5 13.300h15" stroke="currentColor" stroke-width="1.700"/></svg>Orders<svg class="cv"><use href="#chevr"/></svg></a>
        <a><svg viewBox="0 0 16 16"><circle cx="8" cy="8" r="7" fill="currentColor"/><circle cx="8" cy="8" r="7.200" fill="none" stroke="currentColor" stroke-width="1.800" stroke-dasharray="2.500 1.270"/><path d="m5 11 6-6" stroke="#fff" stroke-width="1.300"/><circle cx="5.500" cy="6" r="1.200" fill="#fff"/><circle cx="10.500" cy="10" r="1.200" fill="#fff"/></svg>Coupons</a>
        <a class="two"><svg viewBox="0 0 18 16"><rect x=".8" y=".8" width="16.400" height="14.400" rx="1.500" fill="none" stroke="currentColor" stroke-width="1.500"/><path d="M1 5h16M1 10h16M6.300 2v13M11.700 2v13" stroke="currentColor" stroke-width="1.400"/></svg><span>Book Table / DINE IN</span><br>History<svg class="cv"><use href="#chevr"/></svg></a>
        <a><svg viewBox="0 0 16 16"><path d="M1 .8h13q1 0 1 1v1.700H8q-2 0-2 2v5.200q0 2 2 2h7v1.500q0 1-1 1H2q-1.500 0-1.500-1.500V2Q.5.800 1 .8z" fill="currentColor"/><path d="M7.500 4.500h8v7h-8z" fill="currentColor"/><circle cx="11" cy="8" r="1.800" fill="#fff"/></svg>Payments</a>
      </nav>
      <p class="ver">V:0.1.0</p>
    </aside>
    <main>
      <header><svg class="burger" viewBox="0 0 15 12"><path d="M0 1.200h15M0 6h15M0 10.800h15" stroke="#fff" stroke-width="2.200"/></svg><svg class="user" viewBox="0 0 28 28"><circle cx="14" cy="14" r="14" fill="#4bd15f"/><path d="M17 8l10.500 9A14 14 0 0 1 12 28l-5-6z" fill="#3da84c"/><circle cx="14" cy="10.500" r="4.300" fill="#fff"/><rect x="6" y="17" width="16" height="5" rx="2.500" fill="#fff"/></svg></header>
      <div class="content">
        <section class="card biz">
          <h2>Business Analytics</h2>
          <div class="stats">
            <div class="stat"><p>Total earnings</p><strong>0.00$</strong><svg viewBox="0 0 40 40"><rect width="40" height="40" rx="4"/><rect x="8" y="9.500" width="24" height="18.500" rx="1" fill="none" stroke="#fff" stroke-width="2.600"/><path d="M24 14h-6v4.500h5V23h-6.500M20 12v13" fill="none" stroke="#fff" stroke-width="2.600"/></svg></div>
            <div class="stat"><p>Total Orders</p><strong>0</strong><svg viewBox="0 0 40 40"><rect width="40" height="40" rx="4"/><path d="M6 7.500h4l5 11.500-2.500 4.500H30" fill="none" stroke="#fff" stroke-width="2.400"/><path d="M12 9h20.500l-5 10.500H15z" fill="#fff"/><circle cx="15" cy="28.500" r="2.600" fill="#fff"/><circle cx="27" cy="28.500" r="2.600" fill="#fff"/></svg></div>
            <div class="stat"><p>Total Foods</p><strong>0</strong><svg viewBox="0 0 40 40"><rect width="40" height="40" rx="4"/><path d="M20 7 32 12.500 20 18 8 12.500z" fill="#fff"/><path d="M8.500 18 20 23.300 31.500 18M8.500 23.500 20 28.800l11.500-5.300" fill="none" stroke="#fff" stroke-width="2.700"/></svg></div>
          </div>
          <div class="minis">
            <div><svg viewBox="0 0 20 20" fill="none" stroke="currentColor" stroke-width="1.600"><path d="M2 1h7v6H2zM0 9h11M11 12h7v6h-7zM9 19h11"/><path d="M3 12v6M5 14h3M3 17.500h5" stroke-dasharray="1.500 1"/></svg>Order Placed<b>0</b></div>
            <div><svg viewBox="0 0 20 20"><circle cx="10" cy="10" r="9.300" fill="currentColor"/><path d="m5.500 10.300 3.300 3.200 5.700-6.500" fill="none" stroke="#fff" stroke-width="2"/></svg>Order Confirmed<b>0</b></div>
            <div><svg viewBox="0 0 20 20" fill="none" stroke="currentColor" stroke-width="1.500"><rect x="2" y="3" width="16" height="15.500" rx="1"/><path d="M6 5h8V2.500H6z" fill="currentColor"/><path d="M8 2a2 2 0 0 1 4 0"/></svg>Order Shipped<b>0</b></div>
            <div><svg viewBox="0 0 20 20" fill="none" stroke="currentColor" stroke-width="1.500"><circle cx="10" cy="10" r="8.600"/><path d="m5.800 10 3 3.200 5.400-6.200"/></svg>Order Completed<b>0</b></div>
            <div><svg viewBox="0 0 20 20"><path d="m4 4 12 12M16 4 4 16" stroke="currentColor" stroke-width="1.600"/></svg>Order Canceled<b>0</b></div>
            <div><svg viewBox="0 0 20 20" fill="none" stroke="currentColor" stroke-width="1.500"><circle cx="10" cy="10" r="8.600"/><path d="M10 5v6.500M10 13v2"/></svg>Delivery Failed<b>0</b></div>
            <div><svg class="taxi" viewBox="0 0 20 24"><path d="M1 15 3.500 8.500Q4 7 5.500 7h9q1.500 0 2 1.500L19 15v8h-3v-2H4v2H1z" fill="currentColor"/><path d="M5 9h10l1.500 4.500h-13z" fill="#f8f9fb"/><circle cx="5" cy="17.500" r="1.400" fill="#f8f9fb"/><circle cx="15" cy="17.500" r="1.400" fill="#f8f9fb"/><path d="M5 2.500q5-3.500 10 0M7.500 5q2.500-1.700 5 0" fill="none" stroke="currentColor" stroke-width="1.400"/></svg>Waiting for driver<b>0</b></div>
          </div>
        </section>
        <div class="trio">
          <section class="card tall"><h2>Total Sales</h2>
            <div class="chart"><div class="ylab"><span>$1.00</span><span>$0.90</span><span>$0.80</span><span>$0.70</span><span>$0.60</span><span>$0.50</span><span>$0.40</span><span>$0.30</span><span>$0.20</span><span>$0.10</span><span>$0.00</span></div><div class="plot"><i></i><i></i><i></i><i></i><i></i><i></i><i></i><i></i><i></i><i></i></div></div>
            <div class="months"><span>JAN</span><span>FEB</span><span>MAR</span><span>APR</span><span>MAY</span><span>JUN</span><span>JUL</span><span>AUG</span><span>SEP</span><span>OCT</span><span>NOV</span><span>DEC</span></div>
            <div class="year"><i></i>This year</div>
          </section>
          <section class="card"><h2>Service Overview</h2><div class="legend"><i class="g"></i><span>Total Orders</span><i class="p"></i><span>Total Foods</span></div></section>
          <section class="card"><h2>Sales Overview</h2><div class="legend"><i class="o"></i><span>Total earnings</span></div></section>
        </div>
        <section class="card recent"><div class="rhead"><h2>Recent Orders</h2><svg viewBox="0 0 13 10"><path d="M0 1h13M0 5h13M0 9h13" stroke="#a04508" stroke-width="2"/></svg></div>
          <div class="cols"><span>Order ID</span><span>Client</span><span>Order Type</span><span>Total Amount</span><span>Quantity</span><span>Order Date</span><span>Order Status</span></div>
        </section>
      </div>
    </main>
    <div class="scroll"><svg class="i10" viewBox="0 0 10 10"><path d="M1 7.500 5 3l4 4.500z" fill="#a0a0a0"/></svg><i></i><svg class="i10 dn" viewBox="0 0 10 10"><path d="M1 2.500 5 7l4-4.500z" fill="#505050"/></svg></div>
  </div>

  <footer class="taskbar">
    <div class="wx"><svg><use href="#weather"/></svg><p>22°C<br><small>Très ensoleillé</small></p></div>
    <div class="dock">
      <span class="start"><svg><use href="#winlogo"/></svg></span>
      <div class="tsearch"><svg class="i15"><use href="#mag"/></svg><span>Search</span><svg class="lk"><use href="#lock"/></svg></div>
      <span class="app"><svg><use href="#taskview"/></svg></span><span class="app"><svg><use href="#chat"/></svg></span><span class="app"><svg><use href="#edge"/></svg></span><span class="app run"><svg><use href="#explorer"/></svg></span><span class="app run"><svg><use href="#bing"/></svg><small class="beta">Beta</small></span><span class="app"><svg><use href="#firefox"/></svg></span><span class="app run"><svg><use href="#vscode"/></svg></span><span class="app"><svg><use href="#cmd"/></svg><small class="prompt">C:\_</small></span><span class="app run"><svg><use href="#chrome"/></svg><em>d</em></span>
    </div>
    <div class="tray solo"><p class="clock">12:33 PM<br>5/26/2023</p></div>
  </footer>
</section>
</div>
</body>
</html>
```
FILE: styles.css
```css
* { box-sizing: border-box; }
body { margin: 0; background: #191919; font-family: "Open Sans", "Noto Sans", sans-serif; font-size: 11.4px; line-height: 16px; color: #fff; overflow: hidden; }
p, h2, h3 { margin: 0; font-weight: inherit; }
i, em { font-style: normal; }
svg { display: block; flex: none; }
.defs { position: absolute; width: 0; height: 0; }
.i8 { width: 8px; height: 8px; }
.i10 { width: 10px; height: 10px; }
.i12 { width: 12px; height: 12px; }
.i14 { width: 14px; height: 14px; }
.i15 { width: 15px; height: 15px; }
.i16 { width: 16px; height: 16px; }
.i18 { width: 18px; height: 18px; }

.desk { display: flex; width: 3840px; height: 1080px; }
.screen { position: relative; width: 1920px; height: 1080px; display: flex; flex-direction: column; white-space: nowrap; }

/* Explorer */
.titlebar { height: 32px; background: #202020; display: flex; align-items: center; padding-left: 8px; flex: none; }
.tab-ex { width: 239px; height: 31px; margin-top: 1px; background: #2c2c2c; border-radius: 7px 7px 0 0; display: flex; align-items: center; padding: 0 15px 0 10px; }
.tab-ex b { font-weight: 600; margin-left: 11.5px; flex: 1; letter-spacing: -.1px; }
.tab-ex .i10 { color: #ddd; margin-top: -2px; }
.newtab { margin-left: 19px; color: #ddd; }
.winbtns { display: flex; margin: 0 2px 0 auto; align-self: flex-start; color: #888; }
.winbtns span { width: 46px; height: 28px; display: flex; align-items: center; justify-content: center; }
.winbtns .hot { background: #2d2d2d; color: #fff; width: 45px; }
.cmdbar { height: 55px; background: #2c2c2c; border-bottom: 1px solid #3c3c3c; display: flex; align-items: center; flex: none; }
.cmd { display: flex; align-items: center; height: 32px; color: #fff; }
.cmd .i10 { color: #999; }
.c-new { width: 100px; padding-left: 20px; border-right: 1px solid #3f3f3f; }
.c-new span { margin: 0 5px 0 9px; font-size: 11.6px; }
.cmd-icons { width: 293px; height: 32px; display: flex; gap: 32px; align-items: center; padding-left: 18px; border-right: 1px solid #3f3f3f; }
.dim { opacity: .5; }
.c-sort { padding-left: 16px; width: 105px; }
.c-sort span { margin: 0 5px 0 8px; }
.c-view { width: 79px; border-right: 1px solid #3f3f3f; }
.c-view span { margin: 0 4px 0 9px; }
.dots { display: flex; gap: 3px; margin-left: 16px; }
.dots i { width: 3.5px; height: 3.5px; border-radius: 50%; background: #eee; }
.addr { height: 55px; display: flex; align-items: center; flex: none; }
.addr-nav { width: 137px; padding-left: 14px; display: flex; }
.addr-nav svg + svg { margin-left: 21px; }
.addr-nav svg.n3 { margin-left: 17px; color: #ddd; }
.addr-nav svg.n3 + svg { margin-left: 15px; }
.addr-box, .addr-search { height: 34px; border: 1px solid #535353; display: flex; align-items: center; }
.addr-box { width: 1417px; padding: 0 10px 0 9px; }
.addr-box .i8 { margin: 0 9px 0 6px; }
.addr-box .end { margin: 0 19px 0 auto; }
.addr-search { width: 342px; margin-left: 12px; padding: 0 15px 0 8px; color: #7a7a7a; justify-content: space-between; letter-spacing: -.12px; }
.flip { transform: scaleX(-1); color: #aaa; }
.ex-body { flex: 1; display: flex; min-height: 0; }
.tree { width: 159px; border-right: 2px solid #2b2b2b; overflow: hidden; }
.row { height: 32px; margin: 0 1px 0 2px; display: flex; align-items: center; padding-left: 32px; position: relative; }
.row span { margin-left: 5px; flex: 1; overflow: hidden; letter-spacing: -.08px; }
.row.on { background: #333; }
.pd { padding: 0 1px; }
.f { margin-top: -1px; }
.tw { margin: 0 12px 0 -22px; color: #888; }
.pin { width: 11px; height: 12px; margin-right: 2px; }
.rule { height: 1px; background: #3a3a3a; margin: 16px 9px 15px 10px; }
.files { padding: 6px 0 0 15px; display: flex; gap: 4px; }
.file { width: 105px; height: 116px; display: flex; flex-direction: column; align-items: center; padding-top: 14px; }
.file.on { background: #333; }
.big { width: 84px; height: 67px; margin-right: 2px; }
.file span { margin-top: 17px; letter-spacing: -.03px; }
.status { height: 23px; background: #1c1c1c; display: flex; align-items: center; padding-left: 14px; flex: none; letter-spacing: -.05px; }
.status i { width: 1px; height: 11px; background: #ddd; margin: 0 10px 0 9.5px; }
.v1 { width: 16px; height: 16px; margin-left: auto; }
.v2 { width: 22px; height: 23px; margin: 0 4px 0 3px; background: #5e5e5e; border: 1px solid #8a8a8a; display: grid; place-items: center; }
.v2 svg { width: 16px; height: 16px; }

/* Taskbar */
.taskbar { height: 48px; background: #202020; border-top: 1px solid #484848; display: flex; flex: none; }
.wx { width: 630px; padding-left: 20px; display: flex; align-items: center; }
.wx svg { width: 24px; height: 22px; margin-bottom: 3px; }
.wx p { margin-left: 7px; }
small { font-size: inherit; color: #b5b5b5; }
.dock { display: flex; align-items: center; }
.start { width: 40px; height: 40px; background: #2d2d2d; border: 1px solid #363636; border-radius: 4px; display: grid; place-items: center; }
.start svg { width: 23px; height: 23px; }
.tsearch { width: 219px; height: 32px; margin: 0 2px 0 5px; border-radius: 16px; background: #363636; border: 1px solid #3b3b3b; display: flex; align-items: center; padding: 0 6px 0 10px; font-size: 13px; color: #d0d0d0; }
.tsearch span { margin-left: 10px; flex: 1; }
.lk { width: 50px; height: 24px; }
.app { position: relative; width: 44px; height: 44px; display: grid; place-items: center; }
.app > svg { width: 24px; height: 24px; }
.run::after { content: ""; position: absolute; left: 19px; top: 38px; width: 6px; height: 3px; border-radius: 2px; background: #999; }
.app em { position: absolute; left: 22px; top: 3px; width: 16px; height: 16px; border-radius: 50%; background: #7e57c2; text-align: center; line-height: 15px; font-size: 10px; }
.beta { position: absolute; left: 16px; top: 27px; font-size: 5px; line-height: 7px; font-weight: 700; color: #fff; }
.prompt { position: absolute; left: 12px; top: 16px; font: 6px/8px "Liberation Mono", monospace; color: #ddd; }
.tray { margin-left: auto; padding-right: 20px; display: flex; align-items: center; }
.tcloud { margin-left: 17px; }
.eng { margin-left: 18px; }
.tnet { margin: 0 6px 0 17px; }
.clock { text-align: right; width: 64px; margin-left: 7px; letter-spacing: .15px; }
.notif { width: 16px; height: 16px; border-radius: 50%; background: #dc9be8; color: #222; text-align: center; font-weight: 400; margin-left: 7px; font-size: 10.5px; }
.solo { padding-right: 23px; }

/* Start menu */
.start-menu { position: absolute; left: 639px; top: 294px; width: 642px; height: 727px; background: #2a2a2a; border: 1px solid #454545; border-radius: 8px; overflow: hidden; box-shadow: 0 8px 20px rgba(0,0,0,.45); display: flex; flex-direction: column; padding-top: 32px; }
.sm-search { margin: 0 33px 0 32px; height: 32px; border: 1px solid #3a3a3a; border-radius: 16px; background: #202020; display: flex; align-items: center; padding-left: 16px; font-size: 13.2px; color: #9b9b9b; flex: none; }
.sm-search svg { color: #fff; }
.sm-search span { margin-left: 12px; }
.sm-head { display: flex; justify-content: space-between; align-items: center; height: 24px; padding: 0 64px 0 63px; flex: none; }
.sm-head h3 { font-size: 13.2px; font-weight: 600; letter-spacing: -.08px; margin-top: -2px; }
.sm-head button { font: inherit; color: #fff; background: #343434; border: 1px solid #3a3a3a; border-radius: 4px; height: 24px; padding: 0 6px 0 7px; display: flex; align-items: center; gap: 11px; }
.h-pin { margin-top: 40px; }
.pins { position: relative; margin: 24px 0 0 32px; display: grid; grid-template-columns: repeat(6, 96px); grid-auto-rows: 84px; flex: none; }
.pins > div:not(.pager) { display: flex; flex-direction: column; align-items: center; text-align: center; letter-spacing: .12px; }
.pins svg { width: 32px; height: 32px; margin-bottom: 5px; }
.pager { position: absolute; right: 13px; top: 105px; display: flex; flex-direction: column; align-items: center; gap: 6px; }
.pager i { width: 6px; height: 6px; border-radius: 50%; background: #9d9d9d; }
.pager i + i { width: 4px; height: 4px; }
.h-rec { margin-top: 20px; }
.recs { display: grid; grid-template-columns: 288px 288px; grid-auto-rows: 56px; margin: 13px 0 0 64px; flex: none; letter-spacing: .1px; }
.recs > div { display: flex; align-items: center; }
.recs svg { width: 32px; height: 30px; }
.recs p { margin-left: 12px; }
.recs .wide { letter-spacing: .2px; }
.recs .wide small { letter-spacing: .1px; }
.sm-foot { margin-top: auto; height: 65px; background: #212121; display: flex; align-items: center; padding: 0 64px; flex: none; }
.ava { width: 32px; height: 32px; }
.sm-foot span { margin-left: 12px; flex: 1; }

/* Browser chrome */
.tabs { height: 34px; background: #03393e; display: flex; align-items: center; padding-left: 9px; flex: none; }
.tab { width: 239px; height: 34px; display: flex; align-items: center; padding: 0 11px; color: #c9d5d6; position: relative; letter-spacing: .04px; }
.tab span { margin-left: 8px; flex: 1; overflow: hidden; }
.tab .fade { -webkit-mask-image: linear-gradient(90deg, #000 88%, transparent); mask-image: linear-gradient(90deg, #000 88%, transparent); margin-right: 8px; }
.tab .cl { color: #c3d0d1; }
.snd { margin-right: 12px; }
.tab:not(:nth-child(5)):not(.active)::after { content: ""; position: absolute; right: 0; top: 7px; height: 20px; width: 1px; background: #4f7478; }
.tab.active { background: #055c63; border-radius: 8px 8px 0 0; color: #fff; }
.tab.active .cl { color: #fff; }
.nt { margin-left: 16px; color: #d5dfe0; }
.cw { display: flex; gap: 36px; margin: -6px 18px 0 auto; color: #6a8f92; }
.bar { height: 37px; background: #055c63; border-bottom: 1px solid #2a888f; display: flex; align-items: center; flex: none; }
.bnav { width: 108px; padding-left: 15px; display: flex; gap: 17px; align-items: center; }
.off { opacity: .45; }
.omni { width: 1640px; height: 28px; border-radius: 14px; background: #0f474f; display: flex; align-items: center; padding: 0 10px 0 11px; font-size: 13.2px; color: #a3b6b8; }
.omni i { width: 1px; height: 16px; background: #6f8d90; margin: 0 10px 0 6px; }
.ns { margin-left: 9px; }
.url { flex: 1; letter-spacing: -.11px; }
.url b { font-weight: 400; color: #fff; }
.omni svg + svg { margin-left: 16px; }
.bext { flex: 1; display: flex; align-items: center; padding: 0 15px 0 14px; justify-content: space-between; }
.bext em { width: 22px; height: 22px; border-radius: 50%; background: #7e57c2; text-align: center; line-height: 21px; font-size: 12px; }

/* Dashboard page */
.page { flex: 1; display: flex; min-height: 0; font-family: Inter, "Open Sans", sans-serif; background: #eee; color: #000; overflow: hidden; }
.side { width: 240px; background: #fff; flex: none; box-shadow: 1px 0 20px rgba(0,0,0,.08); color: #6f8792; }
.logo { width: 60px; height: 60px; margin: 4px 0 25px 90px; }
.side a { height: 49.5px; display: flex; align-items: center; padding-left: 18px; font-size: 15px; font-weight: 300; position: relative; }
.side a > svg:first-child { width: 18px; height: 17px; margin-right: 13px; color: #9aabb4; }
.side .act { color: #a04508; font-weight: 400; height: 46px; margin: 1px 0 2px; border-left: 3px solid #a04508; padding-left: 15px; }
.side .act > svg:first-child { color: #a04508; }
.side .cv { width: 12px; height: 12px; margin: 0 10px 0 auto; color: #8598a1; }
.side a.two { height: 62px; display: block; padding-top: 10px; line-height: 21px; }
.side a.two > svg:first-child { display: inline-block; vertical-align: -3px; margin-right: 13px; }
.two span { letter-spacing: -.57px; }
.side .two .cv { position: absolute; right: 10px; top: 24px; margin: 0; }
.ver { text-align: center; margin-top: 17px; line-height: 20px; font-size: 13.5px; font-weight: 600; color: #5b7885; letter-spacing: -.2px; }
main { flex: 1; min-width: 0; }
header { height: 70px; background: #a04508; display: flex; align-items: center; justify-content: space-between; padding: 0 28px 0 22px; }
.burger { width: 15px; height: 12px; margin-bottom: 2px; }
.user { width: 28px; height: 28px; }
.content { padding: 0 30px; }
.card { background: #fff; border-radius: 4px; box-shadow: 0 10px 20px rgba(0,0,0,.03), 0 0 12px rgba(0,0,0,.02); }
h2 { font-size: 21px; font-weight: 500; letter-spacing: .55px; line-height: 30px; }
.biz { height: 404px; padding: 20px; border-radius: 0 0 4px 4px; }
.stats { display: grid; grid-template-columns: repeat(3, 1fr); gap: 30px; margin-top: 16px; }
.stat { position: relative; height: 126px; border: 1px solid #dbe8f0; border-radius: 9px; padding: 40px 30px 0; box-shadow: 0 5px 10px rgba(0,0,0,.04); }
.stat p { font-size: 15px; font-weight: 500; color: #606060; line-height: 20px; letter-spacing: -.03px; }
.stat strong { display: block; margin-top: 11px; line-height: 28px; font-size: 21.5px; font-weight: 600; letter-spacing: .1px; }
.stat svg { position: absolute; right: 16px; top: 16px; width: 40px; height: 40px; fill: #a04508; }
.minis { display: grid; grid-template-columns: repeat(4, 1fr); gap: 10.5px 30px; margin-top: 26px; }
.minis > div { height: 72.7px; border-radius: 10px; background: #f8f9fb; display: flex; align-items: center; padding: 0 20px 0 21px; font-size: 15.2px; font-weight: 500; letter-spacing: .38px; color: #5b5b5b; }
.minis svg { width: 20px; height: 20px; margin: -2px 11px 0 0; color: #a04508; }
.minis .taxi { height: 23px; }
.minis b { margin-left: auto; color: #a04508; font-size: 18px; font-weight: 600; letter-spacing: 0; transform: scaleX(.9); }
.trio { display: grid; grid-template-columns: repeat(3, 1fr); gap: 30px; margin-top: 16px; align-items: start; height: 349px; }
.trio .card { height: 317px; }
.trio .tall { height: 319px; }
.trio h2, .rhead { height: 55px; background: #f7f7f7; border-bottom: 1px solid #d6d6d6; padding: 12px 20px 0; border-radius: 4px 4px 0 0; }
.chart { display: flex; height: 193px; padding: 26px 36px 0 26px; font: bold 12px/16.6px "Liberation Sans", Arial, sans-serif; color: #545b62; }
.ylab { width: 31px; margin-top: -9px; display: flex; flex-direction: column; }
.ylab span { height: 16.6px; }
.plot { position: relative; flex: 1; height: 167px; border-bottom: 1px solid #dedede; }
.plot i { display: block; height: 16.6px; border-top: 1px solid #c6c6c6; }
.plot::before { content: ""; position: absolute; left: 9px; top: 0; width: 1px; height: 166px; background: #c6c6c6; }
.months { display: grid; grid-template-columns: repeat(12, 1fr); margin: 6px 36px 0 66px; font: bold 12px/16px "Liberation Sans", Arial, sans-serif; color: #545b62; text-align: center; }
.year { display: flex; justify-content: flex-end; align-items: center; gap: 4px; margin: 6px 28px 0 0; font-size: 16.2px; font-weight: 300; line-height: 20px; color: #7e9099; }
.year i { width: 14px; height: 14px; border-radius: 3px; background: #30c5d8; }
.legend { display: flex; justify-content: center; align-items: center; margin: 30px 10px 0 0; font: 12px/14px "Liberation Sans", Arial, sans-serif; color: #666; }
.legend i { width: 41px; height: 12px; margin-right: 6px; }
.legend span { letter-spacing: -.03px; margin-top: -3px; }
.legend span + i { margin-left: 10px; }
.g { background: #b2dc6e; }
.p { background: #745fee; }
.o { background: #ffb64d; }
.recent { height: 200px; }
.rhead { display: flex; justify-content: space-between; padding-right: 35px; }
.rhead svg { width: 13px; height: 10px; margin-top: 10px; }
.cols { height: 48px; background: #f9faff; display: grid; grid-template-columns: 194px 154.5px 245.5px 290px 204px 316px 1fr; align-items: center; padding-left: 12px; font-size: 16.3px; letter-spacing: .5px; }
.scroll { width: 17px; background: #f1f1f1; display: flex; flex-direction: column; align-items: center; padding-top: 4px; padding-left: 1px; }
.scroll i { width: 13px; height: 848px; margin-top: 3px; background: #c1c1c1; }
.scroll .dn { margin-top: auto; margin-bottom: 4px; }
```
